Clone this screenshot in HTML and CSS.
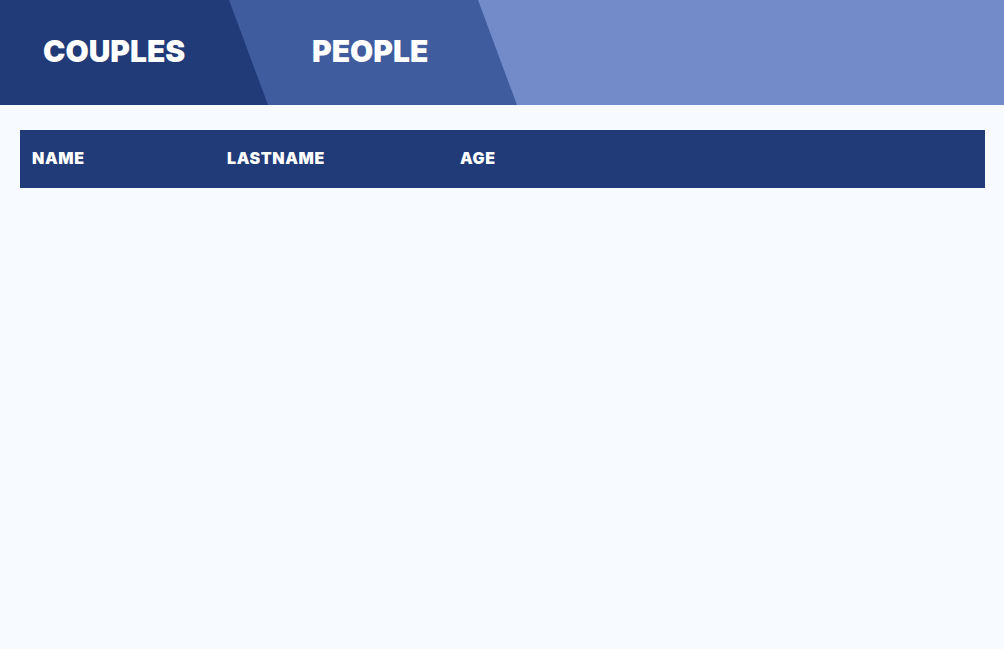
FILE: index.html
```html
<!DOCTYPE html>
<html>
<head>
<meta charset="utf-8">
<link rel="stylesheet" href="styles.css">
</head>
<body>
<header class="tabs">
  <div class="tab tab-active">COUPLES</div>
  <div class="tab tab-second">PEOPLE</div>
</header>
<main class="content">
  <div class="table-head">
    <div class="th">NAME</div>
    <div class="th">LASTNAME</div>
    <div class="th">AGE</div>
  </div>
</main>
</body>
</html>
```
FILE: styles.css
```css
html, body {
  margin: 0;
  padding: 0;
  background: #f7fbff;
  font-family: Inter, "Liberation Sans", sans-serif;
}
.tabs {
  display: flex;
  height: 105px;
  background: #738bc9;
}
.tab {
  display: flex;
  align-items: center;
  color: #ffffff;
  font-size: 30px;
  font-weight: 900;
  letter-spacing: 0;
  padding-bottom: 4px;
  box-sizing: border-box;
}
.tab-active {
  position: relative;
  z-index: 2;
  width: 268px;
  flex: none;
  background: #213a78;
  padding-left: 43px;
  clip-path: polygon(0 0, 229px 0, 268px 100%, 0 100%);
}
.tab-second {
  position: relative;
  z-index: 1;
  width: 288px;
  flex: none;
  margin-left: -39px;
  background: #3f5c9f;
  padding-left: 83px;
  clip-path: polygon(0 0, 249px 0, 288px 100%, 0 100%);
}
.content {
  padding: 25px 19px 0 20px;
}
.table-head {
  display: grid;
  grid-template-columns: 195px 233px 1fr;
  height: 58px;
  align-items: center;
  background: #213a78;
  padding-left: 12px;
  padding-bottom: 2px;
  box-sizing: border-box;
}
.th {
  color: #ffffff;
  font-size: 16px;
  font-weight: 900;
  letter-spacing: 0.6px;
}
```
